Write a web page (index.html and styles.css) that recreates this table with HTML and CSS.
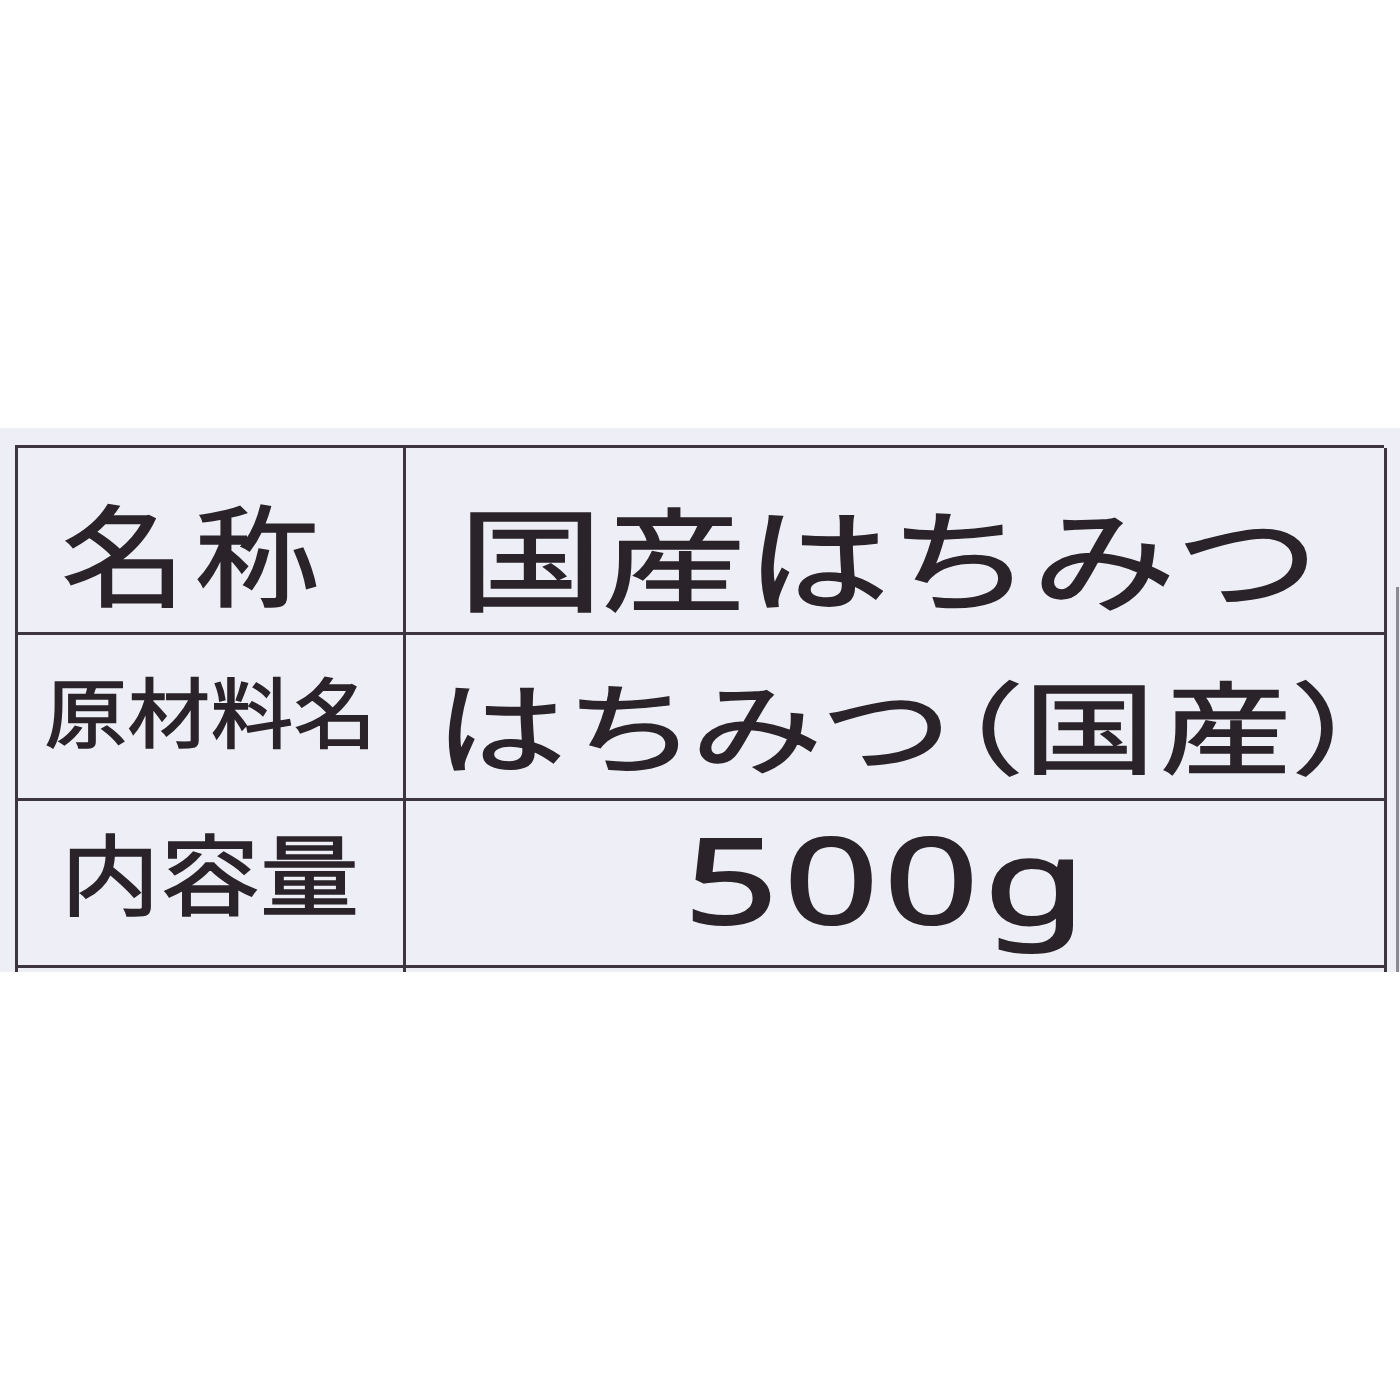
FILE: index.html
```html
<!DOCTYPE html>
<html lang="ja">
<head>
<meta charset="utf-8">
<title>国産はちみつ</title>
<link rel="stylesheet" href="styles.css">
</head>
<body>
<div class="page">
  <div class="band">
    <div class="label-table">
      <div class="cell head"><span class="t t-name">名称</span></div>
      <div class="cell val"><span class="t t-prod">国産はちみつ</span></div>
      <div class="cell head"><span class="t t-raw">原材料名</span></div>
      <div class="cell val"><span class="t t-rawv">はちみつ（国産）</span></div>
      <div class="cell head"><span class="t t-vol">内容量</span></div>
      <div class="cell val"><span class="t t-volv">500g</span></div>
      <div class="cell head"></div>
      <div class="cell val"></div>
    </div>
    <div class="edge"></div>
  </div>
</div>
</body>
</html>
```
FILE: styles.css
```css
html, body {
  margin: 0;
  padding: 0;
  background: #ffffff;
}
.page {
  width: 1400px;
  height: 1400px;
  padding-top: 428px;
  box-sizing: border-box;
}
.band {
  height: 544px;
  background: #eeeff6;
  overflow: hidden;
  display: flex;
  padding: 17px 0 0 15px;
  box-sizing: border-box;
}
.label-table {
  width: 1369px;
  display: grid;
  grid-template-columns: 388px 981px;
  grid-template-rows: 187px 166px 167px 80px;
  border-top: 3px solid #3d3540;
  border-left: 3px solid #3d3540;
  box-sizing: border-box;
  flex: none;
}
.cell {
  border-right: 3px solid #3d3540;
  border-bottom: 3px solid #3d3540;
  display: flex;
  align-items: center;
  justify-content: center;
  color: #2a2329;
  font-family: "Noto Sans CJK JP", "Noto Sans", sans-serif;
  line-height: 1.3;
  -webkit-text-stroke: 1.6px #2a2329;
}
.t {
  display: inline-block;
  white-space: nowrap;
  transform-origin: center center;
}
.t-name {
  font-size: 110px;
  letter-spacing: 8px;
  transform: scaleX(1.13);
  margin-right: 32px;
  padding-top: 20px;
}
.t-prod {
  font-size: 112px;
  transform: scaleX(1.28);
  padding-top: 30px;
  margin-right: 12px;
}
.t-raw {
  font-size: 76px;
  letter-spacing: 1px;
  transform: scaleX(1.08);
  padding-bottom: 14px;
}
.t-rawv {
  font-size: 100px;
  font-feature-settings: "palt";
  letter-spacing: 4px;
  transform: scaleX(1.31);
  padding-top: 12px;
  margin-left: 12px;
}
.t-vol {
  font-size: 88px;
  letter-spacing: 1px;
  transform: scaleX(1.12);
  padding-bottom: 26px;
}
.t-volv {
  font-family: "Noto Sans", sans-serif;
  font-size: 118px;
  letter-spacing: 4px;
  transform: scaleX(1.4);
  margin-right: 14px;
  padding-bottom: 8px;
  -webkit-text-stroke: 2px #2a2329;
}
.edge {
  width: 3px;
  margin-left: 12px;
  margin-top: 142px;
  background: #8c8a92;
  flex: none;
}
```
